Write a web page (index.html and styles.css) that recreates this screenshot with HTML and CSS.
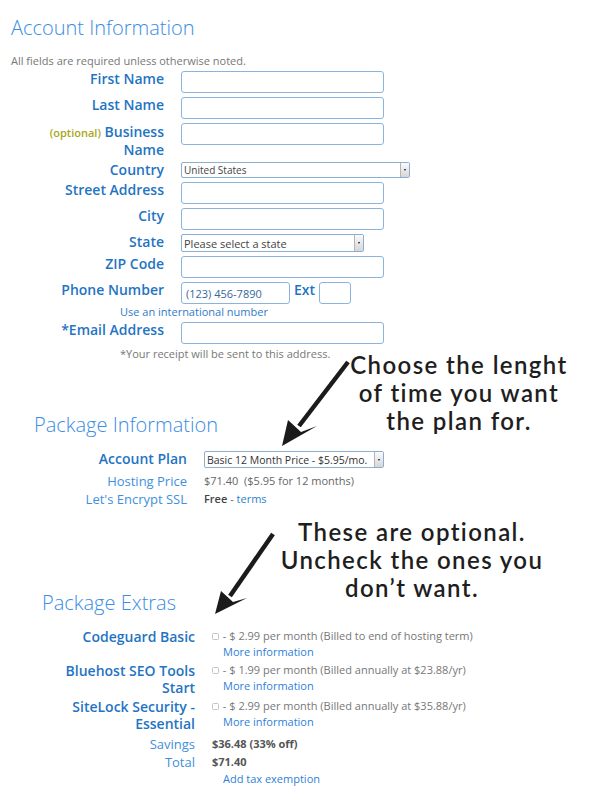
FILE: index.html
```html
<!DOCTYPE html>
<html lang="en">
<head>
    <meta charset="UTF-8">
    <meta name="viewport" content="width=device-width, initial-scale=1.0">
    <title>Account Information</title>
    <link rel="stylesheet" href="styles.css">
</head>
<body>
    <div class="page">
        <section class="section section--account">
            <h2 class="section-title">Account Information</h2>
            <p class="note">All fields are required unless otherwise noted.</p>
            <div class="rows">
                <div class="row">
                    <label class="row-label" for="first-name">First Name</label>
                    <div class="row-field"><input class="text-input" id="first-name" type="text"></div>
                </div>
                <div class="row">
                    <label class="row-label" for="last-name">Last Name</label>
                    <div class="row-field"><input class="text-input" id="last-name" type="text"></div>
                </div>
                <div class="row">
                    <label class="row-label row-label--stacked" for="business"><span class="optional">(optional)</span> Business<br>Name</label>
                    <div class="row-field"><input class="text-input" id="business" type="text"></div>
                </div>
                <div class="row">
                    <label class="row-label" for="country">Country</label>
                    <div class="row-field">
                        <div class="select select--country">
                            <select id="country"><option>United States</option></select>
                        </div>
                    </div>
                </div>
                <div class="row">
                    <label class="row-label" for="street">Street Address</label>
                    <div class="row-field"><input class="text-input" id="street" type="text"></div>
                </div>
                <div class="row">
                    <label class="row-label" for="city">City</label>
                    <div class="row-field"><input class="text-input" id="city" type="text"></div>
                </div>
                <div class="row">
                    <label class="row-label" for="state">State</label>
                    <div class="row-field">
                        <div class="select select--state">
                            <select id="state"><option>Please select a state</option></select>
                        </div>
                    </div>
                </div>
                <div class="row">
                    <label class="row-label" for="zip">ZIP Code</label>
                    <div class="row-field"><input class="text-input" id="zip" type="text"></div>
                </div>
                <div class="row">
                    <label class="row-label" for="phone">Phone Number</label>
                    <div class="row-field row-field--inline">
                        <input class="text-input text-input--phone" id="phone" type="text" value="(123) 456-7890">
                        <label class="row-label" for="ext">Ext</label>
                        <input class="text-input text-input--ext" id="ext" type="text">
                    </div>
                </div>
                <a class="hint hint--link" href="#">Use an international number</a>
                <div class="row">
                    <label class="row-label" for="email">*Email Address</label>
                    <div class="row-field"><input class="text-input" id="email" type="text"></div>
                </div>
                <p class="hint">*Your receipt will be sent to this address.</p>
            </div>
        </section>

        <section class="section section--package">
            <h2 class="section-title">Package Information</h2>
            <div class="rows rows--tight">
                <div class="row row--spaced">
                    <label class="row-label" for="plan">Account Plan</label>
                    <div class="row-field">
                        <div class="select select--plan">
                            <select id="plan"><option>Basic 12 Month Price - $5.95/mo.</option></select>
                        </div>
                    </div>
                </div>
                <div class="row row--info">
                    <span class="row-label row-label--light">Hosting Price</span>
                    <span class="info-value">$71.40&nbsp; ($5.95 for 12 months)</span>
                </div>
                <div class="row row--info">
                    <span class="row-label row-label--light">Let's Encrypt SSL</span>
                    <span class="info-value"><b>Free</b> - <a href="#">terms</a></span>
                </div>
            </div>
        </section>

        <section class="section section--extras">
            <h2 class="section-title">Package Extras</h2>
            <div class="rows rows--extras">
                <div class="row">
                    <span class="row-label row-label--stacked">Codeguard Basic</span>
                    <div class="extra">
                        <label class="extra-line"><input class="check" type="checkbox"> - $ 2.99 per month (Billed to end of hosting term)</label>
                        <a class="extra-link" href="#">More information</a>
                    </div>
                </div>
                <div class="row">
                    <span class="row-label row-label--stacked">Bluehost SEO Tools<br>Start</span>
                    <div class="extra">
                        <label class="extra-line"><input class="check" type="checkbox"> - $ 1.99 per month (Billed annually at $23.88/yr)</label>
                        <a class="extra-link" href="#">More information</a>
                    </div>
                </div>
                <div class="row">
                    <span class="row-label row-label--stacked">SiteLock Security -<br>Essential</span>
                    <div class="extra">
                        <label class="extra-line"><input class="check" type="checkbox"> - $ 2.99 per month (Billed annually at $35.88/yr)</label>
                        <a class="extra-link" href="#">More information</a>
                    </div>
                </div>
                <div class="totals">
                    <div class="row row--total">
                        <span class="row-label row-label--light">Savings</span>
                        <b class="total-value">$36.48 (33% off)</b>
                    </div>
                    <div class="row row--total">
                        <span class="row-label row-label--light">Total</span>
                        <b class="total-value">$71.40</b>
                    </div>
                    <div class="row row--total">
                        <span></span>
                        <a class="extra-link" href="#">Add tax exemption</a>
                    </div>
                </div>
            </div>
        </section>

        <!-- annotations drawn over the form -->
        <p class="callout callout--plan">Choose the lenght<br>of time you want<br>the plan for.</p>
        <svg class="arrow arrow--plan" viewBox="270 350 90 100" width="90" height="100">
            <line x1="348" y1="362" x2="299" y2="426" stroke="#1b1b1b" stroke-width="4.5"/>
            <polygon points="282,446 288,420 301,432 317,426" fill="#1b1b1b"/>
        </svg>

        <p class="callout callout--extras">These are optional.<br>Uncheck the ones you<br>don’t want.</p>
        <svg class="arrow arrow--extras" viewBox="205 525 80 95" width="80" height="95">
            <line x1="273" y1="534" x2="230" y2="596" stroke="#1b1b1b" stroke-width="4.5"/>
            <polygon points="215,614 221,591 233,602 247,598" fill="#1b1b1b"/>
        </svg>
    </div>
</body>
</html>
```

FILE: styles.css
```css
body {
    margin: 0;
    font-family: "Open Sans", "Liberation Sans", sans-serif;
    background: #fff;
    color: #777;
}

.page {
    position: relative;
    width: 597px;
    height: 800px;
    overflow: hidden;
}

.section-title {
    margin: 0;
    font-size: 20px;
    font-weight: 300;
    line-height: 28px;
    color: #3a8de3;
}

.section--account {
    padding-top: 14px;
    margin-left: 11px;
}

.section--package {
    margin: 51px 0 0 34px;
}

.section--extras {
    margin: 81px 0 0 42px;
}

.note {
    margin: 12px 0 3px;
    font-size: 11px;
    line-height: 14px;
    color: #777;
}

.rows {
    display: flex;
    flex-direction: column;
    gap: 4px;
}

.row {
    display: grid;
    grid-template-columns: 153px 1fr;
    column-gap: 17px;
    align-items: start;
}

.row-label {
    text-align: right;
    font-size: 14px;
    font-weight: 600;
    line-height: 16px;
    color: #1f74c4;
}

.row-label--stacked {
    line-height: 17px;
}

.row-label--light {
    font-size: 13px;
    font-weight: 400;
    color: #3f8fdc;
}

.optional {
    font-size: 11px;
    color: #aaa51a;
}

.row-field--inline {
    display: flex;
    align-items: flex-start;
    gap: 4px;
}

.text-input {
    display: block;
    width: 203px;
    height: 22px;
    box-sizing: border-box;
    padding: 0 4px;
    border: 1px solid #8ab4de;
    border-radius: 3px;
    font-family: inherit;
    font-size: 11px;
    color: #35689b;
    background: #fff;
}

.text-input--phone {
    width: 109px;
}

.text-input--ext {
    width: 32px;
}

.hint {
    margin: 0 0 0 109px;
    font-size: 11px;
    line-height: 12px;
    color: #777;
}

.hint--link {
    margin-top: -2px;
    color: #2f7bc6;
    text-decoration: none;
}

/* native select look: white box with a small grey button on the right */
.select {
    position: relative;
    box-sizing: border-box;
    border: 1px solid #8aaed4;
    border-radius: 2px;
    background: #fff;
}

.select select {
    display: block;
    width: 100%;
    height: 100%;
    padding: 0 10px 0 2px;
    border: 0;
    background: transparent;
    font-family: inherit;
    font-size: 11px;
    color: #444;
    appearance: none;
    -webkit-appearance: none;
}

.select::before {
    content: "";
    position: absolute;
    top: 0;
    right: 0;
    bottom: 0;
    width: 8px;
    border-left: 1px solid #b5b5b5;
    background: linear-gradient(#fafafa, #d6d6d6);
}

.select::after {
    content: "";
    position: absolute;
    top: 50%;
    right: 3px;
    margin-top: -1px;
    border-left: 1.5px solid transparent;
    border-right: 1.5px solid transparent;
    border-top: 2px solid #111;
}

.select--country {
    width: 229px;
    height: 16px;
}

.select--country select {
    font-size: 10px;
}

.select--state {
    width: 183px;
    height: 18px;
}

.select--plan {
    width: 180px;
    height: 17px;
}

.select--plan select {
    font-size: 10.5px;
    color: #333;
}

.rows--tight {
    gap: 0;
    margin-top: 12px;
}

.row--spaced {
    margin-bottom: 4px;
}

.row--info .row-label,
.row--info .info-value {
    line-height: 18px;
}

.info-value {
    font-size: 11px;
    color: #666;
}

.info-value b {
    font-weight: 600;
    color: #444;
}

.info-value a {
    color: #2e7fd0;
    text-decoration: none;
}

.rows--extras {
    gap: 2px;
    margin-top: 11px;
}

.extra {
    display: flex;
    flex-direction: column;
    font-size: 11px;
    line-height: 16px;
}

.extra-line {
    color: #777;
    white-space: nowrap;
}

.check {
    width: 7px;
    height: 7px;
    margin: 0 1px 0 0;
    border: 1px solid #c4c4c4;
    border-radius: 1.5px;
    vertical-align: 0;
    appearance: none;
    -webkit-appearance: none;
}

.extra-link {
    padding-left: 11px;
    font-size: 11px;
    line-height: 16px;
    color: #2f7fd9;
    text-decoration: none;
}

.totals {
    margin-top: 1px;
}

.row--total .row-label,
.total-value {
    line-height: 18px;
}

.total-value {
    font-size: 11px;
    font-weight: 700;
    color: #555;
}

.callout {
    position: absolute;
    margin: 0;
    font-family: Lato, "Noto Sans", sans-serif;
    font-size: 24px;
    font-weight: 600;
    line-height: 28px;
    letter-spacing: 1.4px;
    text-align: center;
    color: #1e1e1e;
}

.callout--plan {
    top: 351px;
    left: 339px;
    width: 240px;
}

.callout--extras {
    top: 518px;
    left: 272px;
    width: 280px;
}

.arrow {
    position: absolute;
}

.arrow--plan {
    left: 270px;
    top: 350px;
}

.arrow--extras {
    left: 205px;
    top: 525px;
}
```
